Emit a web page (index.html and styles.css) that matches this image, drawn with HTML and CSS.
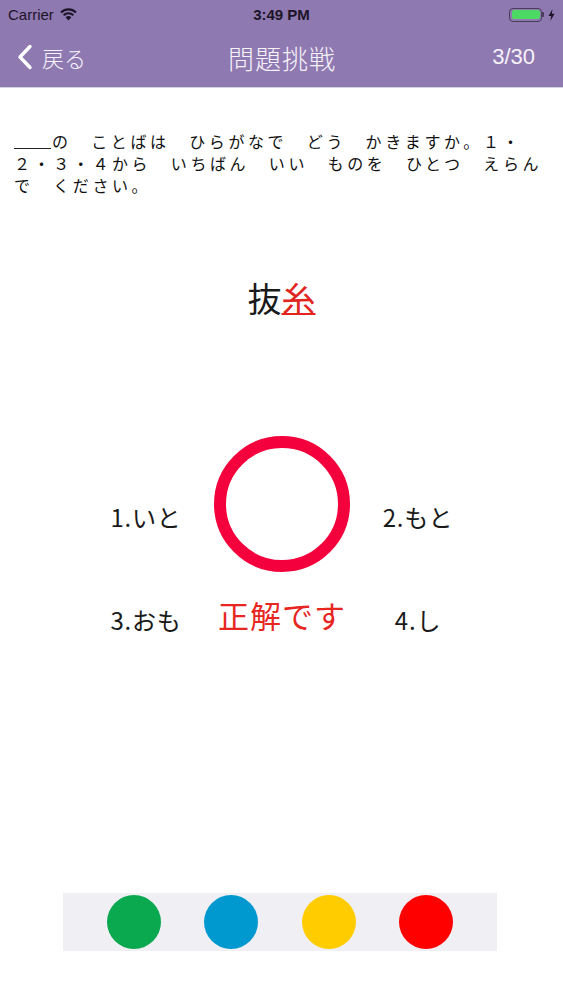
FILE: index.html
```html
<!DOCTYPE html>
<html lang="ja">
<head>
<meta charset="utf-8">
<link rel="stylesheet" href="styles.css">
</head>
<body>
<div class="screen">
  <header class="topbar">
    <div class="status">
      <div class="status-left">
        <span class="carrier">Carrier</span>
        <svg class="wifi" width="17" height="13" viewBox="0 0 17 13">
          <path d="M8.5 12.5 L5.6 9.3 A4.2 4.2 0 0 1 11.4 9.3 Z" fill="#1d1428"/>
          <path d="M3.6 7.3 A7 7 0 0 1 13.4 7.3" stroke="#1d1428" stroke-width="2.1" fill="none"/>
          <path d="M1 4.5 A10.6 10.6 0 0 1 16 4.5" stroke="#1d1428" stroke-width="2.1" fill="none"/>
        </svg>
      </div>
      <div class="time">3:49 PM</div>
      <div class="status-right">
        <div class="battery"><div class="battery-fill"></div></div>
        <div class="battery-nub"></div>
        <svg class="bolt" width="7" height="12" viewBox="0 0 7 12">
          <path d="M4.5 0 L0.5 7 L3.2 7 L2.4 12 L6.5 4.8 L3.8 4.8 Z" fill="#1d1428"/>
        </svg>
      </div>
    </div>
    <nav class="navbar">
      <div class="back">
        <svg class="chevron" width="16" height="26" viewBox="0 0 16 26">
          <path d="M13 2.5 L3 13 L13 23.5" stroke="#fff" stroke-width="3.4" fill="none" stroke-linecap="round" stroke-linejoin="round"/>
        </svg>
        <span class="back-label">戻る</span>
      </div>
      <div class="title">問題挑戦</div>
      <div class="counter">3/30</div>
    </nav>
  </header>

  <main class="content">
    <p class="question"><span class="blank"></span>の　ことばは　ひらがなで　どう　かきますか。１・２・３・４から　いちばん　いい　ものを　ひとつ　えらんで　ください。</p>

    <div class="word">抜<span class="target">糸</span></div>

    <div class="answers">
      <div class="opt opt-top">1.いと</div>
      <div class="mark"></div>
      <div class="opt opt-top">2.もと</div>
      <div class="opt opt-bottom">3.おも</div>
      <div class="result">正解です</div>
      <div class="opt opt-bottom">4.し</div>
    </div>
  </main>

  <footer class="palette">
    <div class="dot green"></div>
    <div class="dot blue"></div>
    <div class="dot yellow"></div>
    <div class="dot red"></div>
  </footer>
</div>
</body>
</html>
```

FILE: styles.css
```css
* { box-sizing: border-box; }
html, body {
  margin: 0;
  padding: 0;
  background: #ffffff;
}
body {
  font-family: "Noto Sans CJK JP", "Noto Sans", "Liberation Sans", sans-serif;
  color: #111;
}
.screen {
  width: 563px;
  height: 1000px;
  display: flex;
  flex-direction: column;
  overflow: hidden;
}
.topbar {
  background: #8f79b1;
  border-bottom: 1px solid #d8d2e2;
  height: 88px;
}
.status {
  height: 29px;
  display: grid;
  grid-template-columns: 1fr auto 1fr;
  align-items: center;
  padding: 0 8px;
  color: #1d1428;
}
.status-left {
  display: flex;
  align-items: center;
  gap: 6px;
}
.carrier {
  font-family: "Liberation Sans", "Noto Sans", sans-serif;
  font-size: 15px;
}
.wifi { margin-top: -1px; }
.time {
  font-family: "Liberation Sans", "Noto Sans", sans-serif;
  font-weight: bold;
  font-size: 15px;
}
.status-right {
  display: flex;
  align-items: center;
  justify-content: flex-end;
}
.battery {
  width: 33px;
  height: 14px;
  border: 1.5px solid #4a3d5a;
  border-radius: 4px;
  padding: 1.5px;
}
.battery-fill {
  width: 100%;
  height: 100%;
  background: #4cd964;
  border-radius: 2px;
}
.battery-nub {
  width: 2px;
  height: 5px;
  background: #4a3d5a;
  border-radius: 0 1px 1px 0;
  margin-right: 4px;
}
.navbar {
  height: 58px;
  display: grid;
  grid-template-columns: 1fr auto 1fr;
  align-items: center;
  padding: 0 28px 2px 28px;
  color: #f6f2fa;
}
.back {
  display: flex;
  align-items: center;
  gap: 9px;
  margin-left: -11px;
}
.back-label {
  font-size: 22px;
  font-weight: 300;
}
.title {
  font-size: 26px;
  font-weight: 300;
  letter-spacing: 1px;
  margin-right: -1px;
}
.counter {
  justify-self: end;
  font-family: "Liberation Sans", "Noto Sans", sans-serif;
  font-size: 22px;
}
.content {
  flex: 1;
  display: flex;
  flex-direction: column;
  align-items: center;
}
.question {
  align-self: stretch;
  margin: 42px 0 0 0;
  padding: 0 14px 0 14px;
  font-size: 16px;
  line-height: 22px;
  letter-spacing: 3.6px;
  color: #111;
}
.blank {
  display: inline-block;
  width: 37px;
  height: 14px;
  border-bottom: 1.5px solid #222;
  margin-right: 1px;
  vertical-align: -1px;
}
.word {
  margin-top: 80px;
  font-size: 34px;
  line-height: 44px;
  color: #1a1a1a;
}
.target {
  color: #e0261f;
  text-decoration: underline;
  text-decoration-thickness: 2px;
  text-underline-offset: 1px;
}
.answers {
  margin-top: 116px;
  display: grid;
  grid-template-columns: 136px 136px 136px;
  grid-template-rows: 136px 63px;
  margin-left: 1px;
}
.mark {
  width: 136px;
  height: 136px;
  border: 12px solid #f4003c;
  border-radius: 50%;
}
.opt {
  font-size: 24px;
  line-height: 30px;
  text-align: center;
  color: #1a1a1a;
  letter-spacing: 0.8px;
}
.opt-top {
  align-self: center;
  padding-top: 26px;
}
.opt-bottom {
  align-self: end;
}
.result {
  align-self: end;
  text-align: center;
  font-size: 31px;
  line-height: 40px;
  color: #e6261f;
  white-space: nowrap;
  letter-spacing: 1px;
}
.palette {
  margin: 0 66px 49px 63px;
  height: 58px;
  background: #efeff4;
  display: flex;
  align-items: center;
  justify-content: space-evenly;
}
.dot {
  width: 54px;
  height: 54px;
  border-radius: 50%;
}
.green { background: #0aa84f; }
.blue { background: #0099cf; }
.yellow { background: #ffcc00; }
.red { background: #ff0000; }
```
